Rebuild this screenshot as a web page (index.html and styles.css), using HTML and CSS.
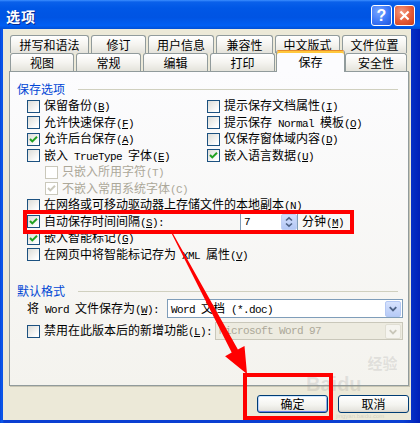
FILE: index.html
```html
<!DOCTYPE html>
<html lang="zh-CN">
<head>
  <meta charset="UTF-8">
  <title>选项</title>
  <link rel="stylesheet" href="styles.css">
</head>
<body>

<div class="window">
  <div class="titlebar">
    <span class="title">选项</span>
    <div class="caption-btns">
      <span class="cap help">?</span>
      <span class="cap close">
        <svg viewBox="0 0 21 21"><path d="M6 6 L15 15 M15 6 L6 15"/></svg>
      </span>
    </div>
  </div>

  <div class="client">
    <div class="tabs">
      <div class="tabrow back">
        <span class="tab t1">拼写和语法</span>
        <span class="tab t2">修订</span>
        <span class="tab t3">用户信息</span>
        <span class="tab t4">兼容性</span>
        <span class="tab t5">中文版式</span>
        <span class="tab t6">文件位置</span>
      </div>
      <div class="tabrow front">
        <span class="tab f1">视图</span>
        <span class="tab f2">常规</span>
        <span class="tab f2">编辑</span>
        <span class="tab f2">打印</span>
        <span class="tab sel">保存</span>
        <span class="tab f6">安全性</span>
      </div>
    </div>

    <div class="panel">
      <div class="legend">保存选项</div>
      <div class="opts">
        <div class="opt"><span class="cb"></span><span>保留备份<span class="m">(<u>B</u>)</span></span></div>
        <div class="opt"><span class="cb"></span><span>提示保存文档属性<span class="m">(<u>I</u>)</span></span></div>
        <div class="opt"><span class="cb"></span><span>允许快速保存<span class="m">(<u>F</u>)</span></span></div>
        <div class="opt"><span class="cb"></span><span>提示保存<span class="m"> Normal </span>模板<span class="m">(<u>O</u>)</span></span></div>
        <div class="opt"><span class="cb"><svg viewBox="0 0 11 11"><path d="M2 5 L4.3 7.4 L9 2.7"/></svg></span><span>允许后台保存<span class="m">(<u>A</u>)</span></span></div>
        <div class="opt"><span class="cb"></span><span>仅保存窗体域内容<span class="m">(<u>D</u>)</span></span></div>
        <div class="opt"><span class="cb"></span><span>嵌入<span class="m"> TrueType </span>字体<span class="m">(<u>E</u>)</span></span></div>
        <div class="opt"><span class="cb"><svg viewBox="0 0 11 11"><path d="M2 5 L4.3 7.4 L9 2.7"/></svg></span><span>嵌入语言数据<span class="m">(<u>U</u>)</span></span></div>

        <div class="opt full sub"><span class="cb"></span><span>只嵌入所用字符<span class="m">(T)</span></span></div>
        <div class="opt full sub"><span class="cb"><svg viewBox="0 0 11 11"><path d="M2 5 L4.3 7.4 L9 2.7"/></svg></span><span>不嵌入常用系统字体<span class="m">(C)</span></span></div>
        <div class="opt full"><span class="cb"></span><span>在网络或可移动驱动器上存储文件的本地副本<span class="m">(<u>N</u>)</span></span></div>
        <div class="opt full">
          <span class="cb"><svg viewBox="0 0 11 11"><path d="M2 5 L4.3 7.4 L9 2.7"/></svg></span>
          <span>自动保存时间间隔<span class="m">(<u>S</u>):</span></span>
          <span class="spin">
            <span class="m">7</span>
            <span class="spin-btn">
              <svg viewBox="0 0 14 14"><path d="M4 5.5 L7 2.8 L10 5.5 M4 8.5 L7 11.2 L10 8.5"/></svg>
            </span>
          </span>
          <span>分钟<span class="m">(<u>M</u>)</span></span>
        </div>
        <div class="opt full"><span class="cb"><svg viewBox="0 0 11 11"><path d="M2 5 L4.3 7.4 L9 2.7"/></svg></span><span>嵌入智能标记<span class="m">(<u>G</u>)</span></span></div>
        <div class="opt full"><span class="cb"></span><span>在网页中将智能标记存为<span class="m"> XML </span>属性<span class="m">(<u>V</u>)</span></span></div>
      </div>

      <div class="legend second">默认格式</div>
      <div class="frow">
        <span>将<span class="m"> Word </span>文件保存为<span class="m">(<u>W</u>):</span></span>
        <span class="combo">
          <span><span class="m">Word </span>文档<span class="m"> (*.doc)</span></span>
          <span class="drop"><svg viewBox="0 0 14 15"><path d="M3.5 5.5 L7 9 L10.5 5.5"/></svg></span>
        </span>
      </div>
      <div class="frow low">
        <span class="opt"><span class="cb"></span><span>禁用在此版本后的新增功能<span class="m">(<u>L</u>):</span></span></span>
        <span class="combo off">
          <span class="m">Microsoft Word 97</span>
          <span class="drop"><svg viewBox="0 0 14 15"><path d="M3.5 5.5 L7 9 L10.5 5.5"/></svg></span>
        </span>
      </div>
    </div>

    <div class="buttons">
      <button class="btn default">确定</button>
      <button class="btn">取消</button>
    </div>
  </div>

  <!-- annotation on top of the screenshot -->
  <div class="watermark">
    <span class="wm-big">Bai<b>du</b></span><span class="wm-jy">经验</span>
  </div>
  <span class="wm-url">jingyan.baidu.com</span>
  <div class="mark one"></div>
  <div class="mark two"></div>
  <svg class="arrow" viewBox="0 0 420 423">
    <polygon points="172.5,232.7 237.9,349.4 244.5,345.9 247,374 225.1,356.2 231.7,352.6 171.5,233.3"/>
  </svg>
</div>

</body>
</html>
```

FILE: styles.css
```css
* {margin:0;padding:0;box-sizing:border-box}
body {
  font: 12px/12px "Noto Sans CJK SC", sans-serif;
  color: #000;
  background: #fff;
}
.m {
  font-family: "Liberation Mono", monospace;
  font-size: 11px;
  letter-spacing: -0.6px;
  white-space: pre;
}

.window {
  position: relative;
  width: 420px;
  height: 423px;
  background: linear-gradient(90deg, #0846D8, #0A5AEE 2px, #0A3FD2 4px, #0A3FD2 96%, #0020B8);
  display: flex;
  flex-direction: column;
  overflow: hidden;
}

/* title bar */
.titlebar {
  height: 29px;
  flex: none;
  display: flex;
  align-items: center;
  justify-content: space-between;
  padding: 2px 5px 0 6px;
  background: linear-gradient(#3C8EFF 0, #0A60EA 2px, #0057E6 8px, #0054E3 60%, #005FF4 88%, #004FD6 100%);
}
.title {
  color: #fff;
  font-weight: bold;
  font-size: 14px;
  line-height: 14px;
  letter-spacing: 1px;
  text-shadow: 1px 1px #0A2A90;
}
.caption-btns {display:flex;gap:2px}
.cap {
  width: 21px;
  height: 21px;
  border: 1px solid #fff;
  border-radius: 3px;
  display: flex;
  align-items: center;
  justify-content: center;
  color: #fff;
}
.help {
  background: radial-gradient(circle at 35% 30%, #78A6FF, #3C78F8 55%, #1D55DA);
  font: bold 16px/16px "Liberation Sans", sans-serif;
}
.close {background: radial-gradient(circle at 35% 30%, #F49A80, #E35A36 55%, #C93D18)}
.close svg {width:21px;height:21px}
.close path {stroke:#fff;stroke-width:2.4;fill:none}

/* dialog body */
.client {
  flex: 1;
  margin: 0 9px 3px 3px;
  background: #ECE9D8;
  padding-top: 6px;
  display: flex;
  flex-direction: column;
}

.tabs {padding-left:7px}
.tabrow {display:flex;height:18px;gap:2px}
.tabrow.front {align-items:flex-end}
.tab {
  height: 18px;
  flex: none;
  display: flex;
  align-items: center;
  justify-content: center;
  border: 1px solid #919B9C;
  border-bottom: none;
  border-radius: 3px 3px 0 0;
  background: linear-gradient(#fff, #F5F4F0 50%, #E4E3DB);
}
.t1 {width:79px}
.t2 {width:55px}
.t3 {width:66px}
.t4 {width:57px}
.t5, .t6 {width:65px}
.f1 {width:64px}
.f2 {width:65px}
.f6 {width:62px;margin-left:-2px}
.tab.sel {
  width: 69px;
  height: 22px;
  margin-left: -1px;
  margin-bottom: -1px;
  padding-top: 1px;
  position: relative;
  z-index: 1;
  background: #FCFCFE;
  border-top: 1px solid #E68B2C;
  box-shadow: inset 0 2px #FFC83C;
}

.panel {
  flex: none;
  margin-left: 6px;
  width: 400px;
  height: 315px;
  border: 1px solid #919B9C;
  box-shadow: 1px 1px 0 #C9C6B4;
  background: linear-gradient(#FCFCFE, #F4F3EE);
  padding: 11px 0 0 7px;
}
.legend {
  display: flex;
  align-items: center;
  height: 12px;
  color: #0046D5;
  margin-right: 10px;
}
.legend::after {
  content: "";
  flex: 1;
  height: 1px;
  margin-left: 13px;
  background: #D0D0BF;
}
.legend.second {margin-top:22.25px}

.opts {
  display: grid;
  grid-template-columns: 180px 1fr;
  grid-auto-rows: 16.5px;
  margin: 2.75px 0 0 10px;
}
.opt {
  display: flex;
  align-items: center;
  gap: 4px;
  white-space: nowrap;
}
.opt.full {grid-column: 1 / -1}
.opt.sub {padding-left:18px;color:#ACA899}

.cb {
  width: 13px;
  height: 13px;
  flex: none;
  display: flex;
  border: 1px solid #1C5180;
  background: linear-gradient(135deg, #DCDCD7, #fff 85%);
}
.cb svg {width:11px;height:11px}
.cb path {fill:none;stroke:#21A121;stroke-width:2}
.opt.sub .cb {border-color:#CAC8BB;background:#fff}
.opt.sub .cb path {stroke:#CAC8BB}

.spin {
  margin: -1px 0 -1px 72px;
  width: 58px;
  height: 18px;
  flex: none;
  display: flex;
  align-items: center;
  justify-content: space-between;
  border: 1px solid #7F9DB9;
  background: #fff;
  padding: 0 0 0 3px;
}
.spin-btn {
  width: 16px;
  height: 16px;
  display: flex;
  border-radius: 2px;
  background: linear-gradient(#D2DFFC, #B3C7F5);
  border: 1px solid #C0D0F4;
}
.spin-btn svg {width:14px;height:14px}
.spin-btn path {fill:none;stroke:#4D6185;stroke-width:1.6}

.frow {
  display: flex;
  align-items: center;
  justify-content: space-between;
  height: 19px;
  margin: 2px 5px 0 10px;
  white-space: nowrap;
}
.frow.low {height:18px;margin-top:4px}
.combo {
  width: 236px;
  height: 19px;
  display: flex;
  align-items: center;
  justify-content: space-between;
  border: 1px solid #7F9DB9;
  background: #fff;
  padding: 0 1px 0 3px;
}
.drop {
  width: 16px;
  height: 16px;
  display: flex;
  border-radius: 2px;
  border: 1px solid #B4C8F4;
  background: linear-gradient(#D6E2FD, #B7CBF7);
}
.drop svg {width:14px;height:14px}
.drop path {fill:none;stroke:#4D6185;stroke-width:2}
.combo.off {
  width: 188px;
  height: 18px;
  border-color: #C9C7BA;
  background: #EDEBE0;
  color: #ACA899;
}
.combo.off .drop {height:15px;border-color:#E0DED3;background:#F5F4EF}
.combo.off .drop path {stroke:#C9C7BA}

.buttons {
  display: flex;
  justify-content: flex-end;
  gap: 10px;
  margin-top: 9px;
  padding-right: 2px;
}
.btn {
  width: 71px;
  height: 18px;
  font: 12px/12px "Noto Sans CJK SC", sans-serif;
  color: #000;
  border: 1px solid #003C74;
  border-radius: 3px;
  background: linear-gradient(#fff, #F4F4F0 55%, #E6E5DF 88%, #D6D0C5);
}
.btn.default {
  box-shadow: inset 0 1px #CEE7FF, inset 0 -1px #6982EE, inset 1px 0 #B8D2FB, inset -1px 0 #8EAFEA;
}

/* red annotation marks and watermark */
.mark {position:absolute;border:4px solid #F00}
.mark.one {left:23px;top:210px;width:331px;height:24px}
.mark.two {left:243px;top:373px;width:90px;height:47px}
.arrow {position:absolute;left:0;top:0;width:420px;height:423px}
.arrow polygon {fill:#F00}

.watermark {
  position: absolute;
  left: 306px;
  top: 352px;
  width: 100px;
  color: rgba(150,150,150,0.22);
  font-family: "Liberation Sans", sans-serif;
}
.wm-big {font-size:20px;line-height:20px;font-weight:bold;position:relative;top:22px}
.wm-big b {font-weight:bold}
.wm-jy {font: bold 15px/15px "Noto Sans CJK SC", sans-serif;margin-left:6px}
.wm-url {
  position: absolute;
  left: 336px;
  top: 413px;
  font: 6px/6px "Liberation Sans", sans-serif;
  color: rgba(150,150,150,0.3);
}
```
